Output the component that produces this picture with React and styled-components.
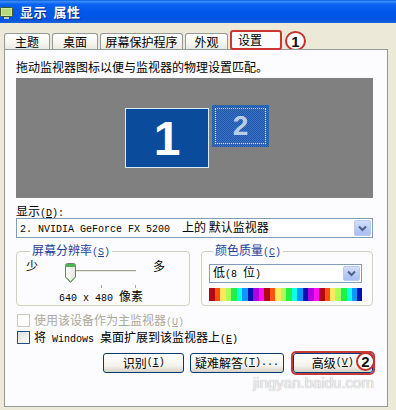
import React from "react";
import styled, { createGlobalStyle } from "styled-components";

const GlobalStyle = createGlobalStyle`
  html, body {
    margin: 0;
    padding: 0;
  }
  body {
    background: #ece9d8;
    font-family: "Noto Sans CJK SC", "Liberation Sans", sans-serif;
    font-size: 12px;
    color: #000;
  }
`;

const palette = [
  "#b00818",
  "#ff5010",
  "#ffe860",
  "#a8ff58",
  "#20f048",
  "#10ffe8",
  "#0898ff",
  "#0810b0",
  "#b000e0",
  "#ff10f0",
];

const bandStops = Array.from({ length: 28 })
  .map((_, i) => {
    const c = palette[i % palette.length];
    return `${c} ${i * 5.5}px ${(i + 1) * 5.5}px`;
  })
  .join(", ");

const Window = styled.div`
  position: relative;
  width: 396px;
  height: 410px;
  display: flex;
  flex-direction: column;
  background: #ece9d8;
  overflow: hidden;
`;

const TitleBar = styled.div`
  flex: none;
  height: 23px;
  display: flex;
  align-items: center;
  gap: 5px;
  background: linear-gradient(
    to bottom,
    #0b5fe8 0%,
    #3b8cf6 7%,
    #0a62f2 18%,
    #0058ea 55%,
    #0054e0 85%,
    #1d63d8 100%
  );
  color: #fff;
`;

const TitleText = styled.span`
  font-size: 13px;
  font-weight: 700;
  letter-spacing: 0.5px;
  text-shadow: 1px 1px 0 #0a2a80;
  word-spacing: 3px;
`;

const TabRow = styled.div`
  flex: none;
  height: 26px;
  display: flex;
  align-items: flex-end;
  gap: 2px;
  padding-left: 4px;
`;

const Tab = styled.div`
  box-sizing: border-box;
  width: ${(p) => p.$w}px;
  height: 16px;
  border: 1px solid #919b9c;
  border-bottom: none;
  border-radius: 3px 3px 0 0;
  background: linear-gradient(#ffffff, #f6f5f0 60%, #e9e8e1);
  line-height: 15px;
  text-align: center;
`;

const ActiveTab = styled.div`
  position: relative;
  z-index: 1;
  box-sizing: border-box;
  width: 52px;
  height: 20px;
  margin-bottom: -1px;
  padding-left: 6px;
  border: 2px solid #cc3531;
  border-radius: 3px;
  background: #fcfcfe;
  line-height: 16px;
`;

const Badge = styled.span`
  display: inline-flex;
  align-items: center;
  justify-content: center;
  box-sizing: border-box;
  width: 21px;
  height: 20px;
  margin: 0 0 -2px 1px;
  border: 2px solid #c4312d;
  border-radius: 50%;
  background: #fff;
  color: #111;
  font: 700 15px "Liberation Sans", sans-serif;
`;

const OverBadge = styled(Badge)`
  position: absolute;
  right: -3px;
  top: -2px;
  margin: 0;
  width: 19px;
  height: 19px;
`;

const Panel = styled.div`
  flex: 1;
  margin: 0 8px 3px 4px;
  padding: 10px 14px 0 11px;
  border: 1px solid #919b9c;
  background: #fcfcfe;
  display: flex;
  flex-direction: column;
`;

const Hint = styled.div`
  line-height: 14px;
  height: 14px;
`;

const Desktop = styled.div`
  position: relative;
  height: 120px;
  margin-top: 4px;
  background: #808080;
`;

const PrimaryMonitor = styled.div`
  position: absolute;
  left: 109px;
  top: 30px;
  box-sizing: border-box;
  width: 84px;
  height: 60px;
  border: 1px solid #d8ecf4;
  background: #0b4b9b;
  display: flex;
  align-items: center;
  justify-content: center;
  color: #fff;
  font: 700 48px "Liberation Sans", sans-serif;
`;

const SecondMonitor = styled.div`
  position: absolute;
  left: 196px;
  top: 27px;
  box-sizing: border-box;
  width: 57px;
  height: 42px;
  padding: 3px;
  background-color: #2c63b6;
  background-image: repeating-conic-gradient(#1f56ab 0 25%, #3c72c4 0 50%);
  background-size: 2px 2px;
`;

const SecondInner = styled.div`
  box-sizing: border-box;
  height: 100%;
  border: 1px dotted #d6e4f4;
  display: flex;
  align-items: center;
  justify-content: center;
  color: #b9cde6;
  font: 700 28px "Liberation Sans", sans-serif;
`;

const Label = styled.div`
  margin-top: 6px;
  line-height: 14px;
  height: 14px;
`;

const Mono = styled.span`
  font-family: "Liberation Mono", monospace;
  font-size: 10px;
  white-space: pre;
`;

const Combo = styled.div`
  box-sizing: border-box;
  height: ${(p) => p.$h || 20}px;
  margin-top: ${(p) => p.$top || 0}px;
  border: 1px solid #7f9db9;
  background: #fff;
  display: flex;
  align-items: center;
`;

const ComboText = styled.span`
  flex: 1;
  padding-left: 3px;
  white-space: pre;
  line-height: 14px;
`;

const DropButton = styled.span`
  align-self: stretch;
  width: 15px;
  margin: 1px;
  border: 1px solid #b9c9ef;
  border-radius: 2px;
  background: linear-gradient(#d2dffc, #b6c9f5 60%, #a9bff2);
  display: flex;
  align-items: center;
  justify-content: center;
`;

const Groups = styled.div`
  display: grid;
  grid-template-columns: 174px 172px;
  gap: 11px;
  margin-top: 6px;
`;

const Group = styled.fieldset`
  box-sizing: border-box;
  height: 62px;
  margin: 0;
  padding: 0 ${(p) => (p.$right ? 10 : 9)}px 0 ${(p) => (p.$right ? 7 : 9)}px;
  border: 1px solid #d0d0bf;
  border-radius: 4px;
  min-width: 0;
`;

const Legend = styled.legend`
  padding: 0 2px;
  margin-left: 4px;
  line-height: 12px;
  color: #1b3f9c;
`;

const SliderRow = styled.div`
  display: flex;
  align-items: flex-start;
  height: 30px;
  line-height: 14px;
`;

const SliderGraphic = styled.svg`
  margin: 2px 13px 0 24px;
`;

const Resolution = styled.div`
  line-height: 14px;
  text-align: center;
  padding-right: 4px;
`;

const ColorBar = styled.div`
  height: 13px;
  margin-top: 5px;
  background: linear-gradient(to right, ${bandStops});
`;

const CheckRow = styled.div`
  display: flex;
  align-items: center;
  gap: 4px;
  height: 13px;
  margin-top: ${(p) => p.$top}px;
  padding-left: 1px;
  line-height: 13px;
  color: ${(p) => (p.$disabled ? "#aca899" : "#000")};
`;

const Box = styled.span`
  box-sizing: border-box;
  width: 13px;
  height: 13px;
  border: 1px solid ${(p) => (p.$disabled ? "#cac8bb" : "#1c5180")};
  background: ${(p) =>
    p.$disabled ? "#fff" : "linear-gradient(135deg, #dcdcd7, #ffffff)"};
`;

const ButtonRow = styled.div`
  display: flex;
  margin-top: 9px;
  padding-left: 87px;
`;

const Button = styled.div`
  position: relative;
  box-sizing: border-box;
  width: ${(p) => p.$w}px;
  height: 20px;
  margin-left: ${(p) => p.$gap || 0}px;
  border: 1px solid #003c74;
  border-radius: 3px;
  background: linear-gradient(#ffffff, #f4f3ee 65%, #d8d2c6);
  display: flex;
  align-items: center;
  justify-content: center;
  line-height: 14px;
  white-space: pre;
  box-shadow: ${(p) => (p.$marked ? "0 0 0 2px #c8393a" : "none")};
`;

const WaterUrl = styled.div`
  position: absolute;
  left: 253px;
  top: 375px;
  color: rgba(255, 255, 255, 0.85);
  font: 400 15px/16px "Liberation Sans", sans-serif;
  text-shadow: 0 0 1px rgba(90, 90, 90, 0.7);
  pointer-events: none;
`;

const Key = ({ k }) => (
  <Mono>
    (<u>{k}</u>)
  </Mono>
);

const Chevron = () => (
  <svg width="9" height="7" viewBox="0 0 9 7">
    <path d="M1 1.5 L4.5 5 L8 1.5" fill="none" stroke="#4d6185" strokeWidth="2" />
  </svg>
);

const Slider = () => (
  <SliderGraphic width="78" height="28" viewBox="0 0 78 28">
    <defs>
      <linearGradient id="thumb" x1="0" y1="0" x2="1" y2="0">
        <stop offset="0" stopColor="#ffffff" />
        <stop offset="1" stopColor="#e4e4dc" />
      </linearGradient>
    </defs>
    <line x1="8" y1="9.5" x2="74" y2="9.5" stroke="#a0a098" />
    <line x1="8" y1="10.5" x2="74" y2="10.5" stroke="#e8e8e0" />
    <line x1="39.5" y1="24" x2="39.5" y2="27" stroke="#a8a8a0" />
    <line x1="73.5" y1="24" x2="73.5" y2="27" stroke="#a8a8a0" />
    <path
      d="M3.5 4.5 Q3.5 2.5 5.5 2.5 H11.5 Q13.5 2.5 13.5 4.5 V16 L8.5 21.5 L3.5 16 Z"
      fill="url(#thumb)"
      stroke="#6f7f6a"
    />
    <rect x="4" y="3" width="9" height="3" fill="#4fb34f" />
    <path d="M4.5 16.5 L8.5 20.5 L12.5 16.5" fill="none" stroke="#5dbb5d" />
  </SliderGraphic>
);

const AppIcon = () => (
  <svg width="15" height="14" viewBox="0 0 15 14">
    <rect x="0.5" y="2.5" width="12" height="9" rx="1" fill="#d4e8a8" stroke="#3b5a2a" />
    <rect x="2" y="4" width="9" height="6" fill="#b8dc7c" />
    <rect x="4" y="12" width="5" height="2" fill="#c8c8c0" />
  </svg>
);

const tabs = [
  { label: "主题", w: 46 },
  { label: "桌面", w: 46 },
  { label: "屏幕保护程序", w: 83 },
  { label: "外观", w: 43 },
];

export default function App() {
  return (
    <>
      <GlobalStyle />
      <Window>
        <TitleBar>
          <AppIcon />
          <TitleText>显示 属性</TitleText>
        </TitleBar>

        <TabRow>
          {tabs.map((t) => (
            <Tab key={t.label} $w={t.w}>
              {t.label}
            </Tab>
          ))}
          <ActiveTab>设置</ActiveTab>
          <Badge>1</Badge>
        </TabRow>

        <Panel>
          <Hint>拖动监视器图标以便与监视器的物理设置匹配。</Hint>

          <Desktop>
            <PrimaryMonitor>1</PrimaryMonitor>
            <SecondMonitor>
              <SecondInner>2</SecondInner>
            </SecondMonitor>
          </Desktop>

          <Label>
            显示<Key k="D" />
            <Mono>:</Mono>
          </Label>
          <Combo>
            <ComboText>
              <Mono>2. NVIDIA GeForce FX 5200  </Mono>上的 默认监视器
            </ComboText>
            <DropButton>
              <Chevron />
            </DropButton>
          </Combo>

          <Groups>
            <Group>
              <Legend>
                屏幕分辨率<Key k="S" />
              </Legend>
              <SliderRow>
                <span>少</span>
                <Slider />
                <span>多</span>
              </SliderRow>
              <Resolution>
                <Mono>640 x 480 </Mono>像素
              </Resolution>
            </Group>

            <Group $right>
              <Legend>
                颜色质量<Key k="C" />
              </Legend>
              <Combo $h={19} $top={5}>
                <ComboText>
                  低<Mono>(8 </Mono>位<Mono>)</Mono>
                </ComboText>
                <DropButton>
                  <Chevron />
                </DropButton>
              </Combo>
              <ColorBar />
            </Group>
          </Groups>

          <CheckRow $top={8} $disabled>
            <Box $disabled />
            <span>
              使用该设备作为主监视器<Key k="U" />
            </span>
          </CheckRow>
          <CheckRow $top={4}>
            <Box />
            <span>
              将<Mono> Windows </Mono>桌面扩展到该监视器上<Key k="E" />
            </span>
          </CheckRow>

          <ButtonRow>
            <Button $w={82}>
              识别<Key k="I" />
            </Button>
            <Button $w={94} $gap={6}>
              疑难解答<Key k="T" />
              <Mono>...</Mono>
            </Button>
            <Button $w={81} $gap={9} $marked>
              高级<Key k="V" />
              <OverBadge>2</OverBadge>
            </Button>
          </ButtonRow>
        </Panel>

        <WaterUrl>jingyan.baidu.com</WaterUrl>
      </Window>
    </>
  );
}
